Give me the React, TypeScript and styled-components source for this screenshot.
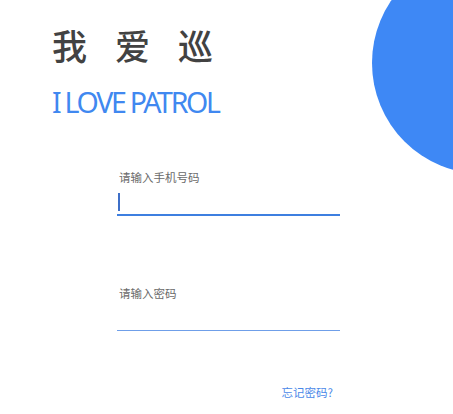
import React from 'react';
import styled, { createGlobalStyle } from 'styled-components';

const GlobalStyle = createGlobalStyle`
  html, body {
    margin: 0;
    padding: 0;
    background: #ffffff;
    font-family: "Noto Sans", "Noto Sans CJK SC", sans-serif;
  }
`;

const Page = styled.div`
  position: relative;
  width: 453px;
  height: 414px;
  overflow: hidden;
  background: #ffffff;
`;

const Circle = styled.div`
  position: absolute;
  left: 372px;
  top: -48px;
  width: 222px;
  height: 222px;
  border-radius: 50%;
  background: #3e88f5;
`;

const Header = styled.header`
  padding: 20px 0 0 52px;
`;

const Title = styled.h1`
  margin: 0;
  font-family: "Noto Sans CJK SC", sans-serif;
  font-size: 35px;
  font-weight: 500;
  line-height: 50px;
  letter-spacing: 28px;
  color: #424242;
`;

const Subtitle = styled.div`
  margin-top: 15px;
  font-family: "Noto Sans", sans-serif;
  font-size: 28.5px;
  line-height: 34px;
  letter-spacing: -2.3px;
  color: #4088f0;
`;

const Form = styled.form`
  display: flex;
  flex-direction: column;
  width: 223px;
  margin: 50px 0 0 117px;
`;

const Field = styled.label<{ $gap: number }>`
  display: flex;
  flex-direction: column;
  margin-top: ${p => p.$gap}px;
`;

const Label = styled.span`
  padding-left: 2px;
  font-family: "Noto Sans CJK SC", sans-serif;
  font-size: 11.5px;
  line-height: 16px;
  color: #6a6a6a;
`;

const InputWrap = styled.div<{ $active?: boolean }>`
  position: relative;
  height: 24px;
  margin-top: 5px;
  border-bottom: ${p => (p.$active ? '2px solid #3e7fe0' : '1px solid #6f9fe9')};
`;

const Input = styled.input`
  width: 100%;
  height: 100%;
  box-sizing: border-box;
  border: none;
  outline: none;
  padding: 0;
  background: transparent;
  font-size: 14px;
  caret-color: transparent;
`;

const Caret = styled.span`
  position: absolute;
  left: 1px;
  top: 3px;
  width: 2px;
  height: 18px;
  background: #3e6fc8;
`;

const Forgot = styled.a`
  align-self: flex-end;
  margin: 53px 7px 0 0;
  font-family: "Noto Sans CJK SC", sans-serif;
  font-size: 11.5px;
  line-height: 16px;
  color: #4a88e8;
  text-decoration: none;
`;

export default function App() {
  return (
    <Page>
      <GlobalStyle />
      <Circle />
      <Header>
        <Title>我爱巡</Title>
        <Subtitle>I LOVE PATROL</Subtitle>
      </Header>
      <Form>
        <Field $gap={0}>
          <Label>请输入手机号码</Label>
          <InputWrap $active>
            <Input type="tel" />
            <Caret />
          </InputWrap>
        </Field>
        <Field $gap={69}>
          <Label>请输入密码</Label>
          <InputWrap>
            <Input type="password" />
          </InputWrap>
        </Field>
        <Forgot href="#">忘记密码?</Forgot>
      </Form>
    </Page>
  );
}
